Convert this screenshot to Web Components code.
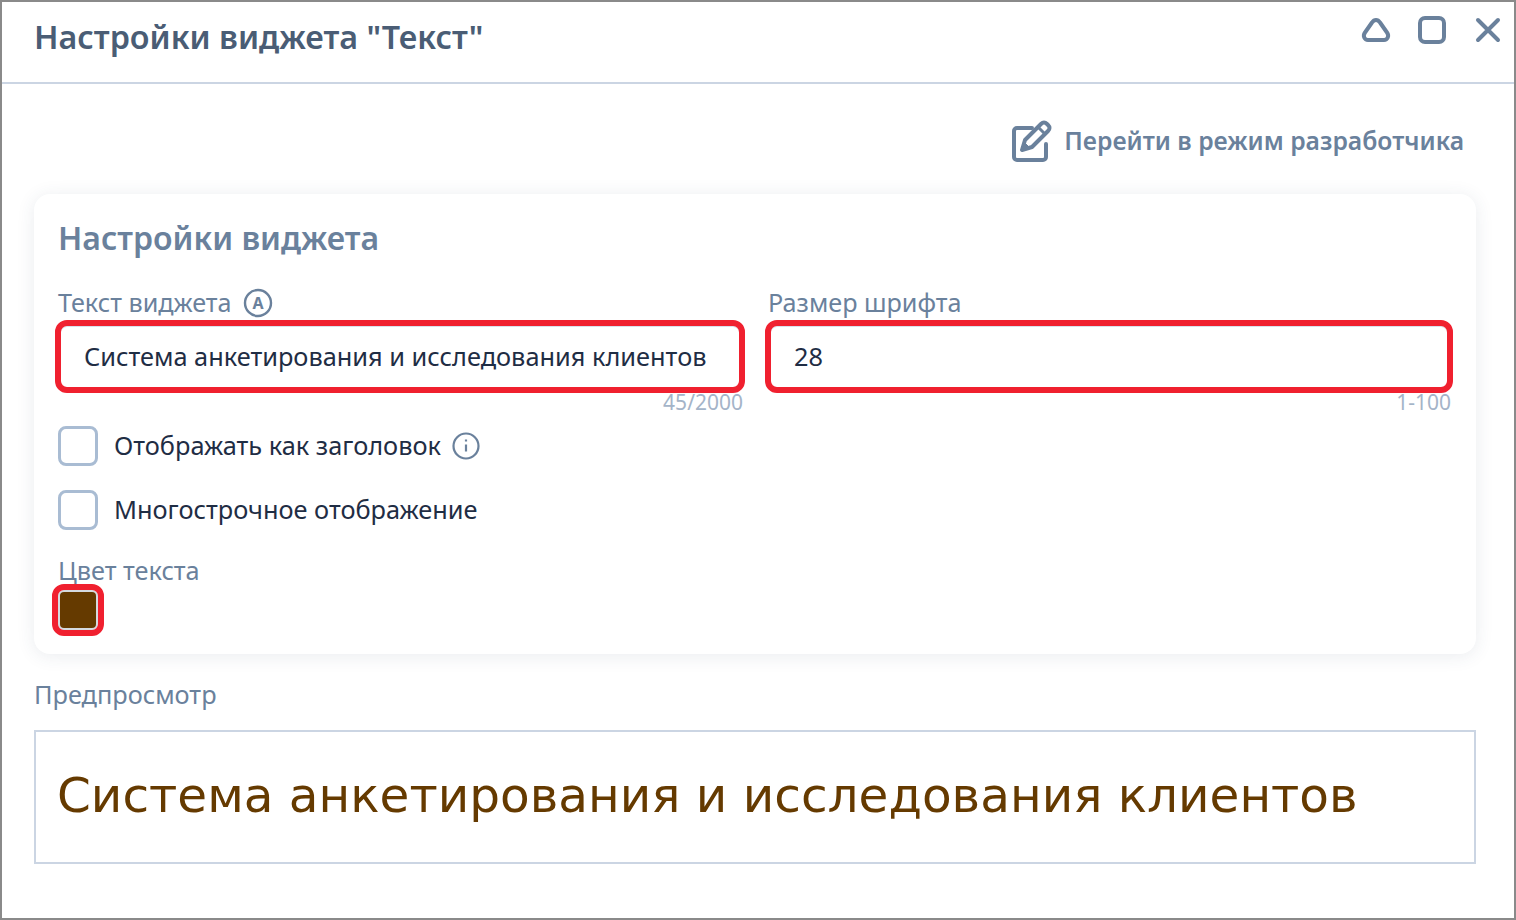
<!DOCTYPE html>
<html>
<head>
<meta charset="utf-8">
<style>
  html, body { margin: 0; height: 100%; background: #fff; }
  body { font-family: "Noto Sans", "Open Sans", sans-serif; }
</style>
</head>
<body>
<widget-window window-title='Настройки виджета "Текст"'>
  <dev-link>Перейти в режим разработчика</dev-link>
  <settings-card heading="Настройки виджета">
    <div slot="fields" style="display:contents">
      <text-field label="Текст виджета" hint="45/2000" value="Система анкетирования и исследования клиентов" auto></text-field>
      <text-field label="Размер шрифта" hint="1-100" value="28"></text-field>
    </div>
    <check-row info>Отображать как заголовок</check-row>
    <check-row>Многострочное отображение</check-row>
    <color-field label="Цвет текста" color="#653a00"></color-field>
  </settings-card>
  <preview-box label="Предпросмотр" color="#653a00">Система анкетирования и исследования клиентов</preview-box>
</widget-window>

<script>
class WidgetWindow extends HTMLElement {
  constructor() {
    super();
    this.attachShadow({ mode: "open" });
    this.shadowRoot.innerHTML = `
    <style>
    :host {
      display: flex;
      flex-direction: column;
      box-sizing: border-box;
      width: 1516px;
      height: 920px;
      border: 2px solid #8a8a8a;
      background: #fff;
    }
    header {
      display: flex;
      justify-content: space-between;
      align-items: flex-start;
      height: 82px;
      flex: none;
      box-sizing: border-box;
      border-bottom: 2px solid #cbd5e3;
      padding: 0 6px 0 32px;
    }
    h1 {
      margin: 14px 0 0;
      font-size: 32.300px;
      line-height: 40px;
      font-weight: 600;
      color: #4a5d75;
    }
    .tools { display: flex; gap: 16px; padding-top: 11px; }
    svg { display: block; width: 40px; height: 36px; fill: none; stroke: #6a819c; stroke-width: 4; stroke-linejoin: round; stroke-linecap: round; }
    main { flex: 1; padding: 0 38px 0 32px; }
    </style>
    <header>
      <h1></h1>
      <div class="tools">
        <svg viewBox="0 0 40 36"><path d="M20 7c-2 0-3 1-4 2.500L9 19.500C6.500 23 8.500 27 12 27h16c3.500 0 5.500-4 3-7.500L24 9.500C23 8 22 7 20 7z"/></svg>
        <svg viewBox="0 0 40 36"><rect x="8" y="5" width="24" height="24" rx="5"/></svg>
        <svg viewBox="0 0 40 36"><path d="M10 7l20 20M30 7L10 27"/></svg>
      </div>
    </header>
    <main><slot></slot></main>
    `;
  }
  connectedCallback() {
    this.shadowRoot.querySelector("h1").textContent = this.getAttribute("window-title");
  }
}

class DevLink extends HTMLElement {
  constructor() {
    super();
    this.attachShadow({ mode: "open" });
    this.shadowRoot.innerHTML = `
    <style>
    :host {
      display: flex;
      justify-content: flex-end;
      align-items: center;
      gap: 12px;
      height: 64px;
      margin-top: 24px;
      margin-bottom: 22px;
      padding-right: 12px;
      color: #6a819c;
      font-size: 24.700px;
      font-weight: 600;
    }
    svg { width: 44px; height: 44px; fill: none; stroke: #6a819c; stroke-width: 4; stroke-linejoin: round; stroke-linecap: round; }
    </style>
    <svg viewBox="0 0 44 44">
      <path d="M24 10H9a3 3 0 0 0-3 3v26a3 3 0 0 0 3 3h26a3 3 0 0 0 3-3V26"/>
      <path d="M14 32l3-10L33 6c2-2 4-2 6 0l1 1c2 2 2 4 0 6L24 29z"/>
      <path d="M30 9l7 7" stroke-width="3"/>
      <path d="M15 31l2-6 4 4z" fill="#6a819c" stroke-width="1"/>
    </svg>
    <span><slot></slot></span>
    `;
  }
}

class SettingsCard extends HTMLElement {
  constructor() {
    super();
    this.attachShadow({ mode: "open" });
    this.shadowRoot.innerHTML = `
    <style>
    :host {
      display: block;
      box-sizing: border-box;
      height: 460px;
      padding: 22px 23px 0 21px;
      background: #fff;
      border-radius: 16px;
      box-shadow: 0 2px 18px rgba(50, 70, 100, .10);
    }
    h2 {
      margin: 0 0 0 3px;
      font-size: 32px;
      line-height: 44px;
      font-weight: 600;
      color: #6a819c;
    }
    .fields {
      display: grid;
      grid-template-columns: 690px 1fr;
      column-gap: 20px;
      margin-top: 24px;
    }
    </style>
    <h2></h2>
    <div class="fields"><slot name="fields"></slot></div>
    <div class="rest"><slot></slot></div>
    `;
  }
  connectedCallback() {
    this.shadowRoot.querySelector("h2").textContent = this.getAttribute("heading");
  }
}

class TextField extends HTMLElement {
  constructor() {
    super();
    this.attachShadow({ mode: "open" });
    this.shadowRoot.innerHTML = `
    <style>
    :host { display: block; margin-bottom: 14px; }
    .label {
      display: flex;
      align-items: center;
      gap: 11px;
      height: 36px;
      margin-left: 3px;
      font-size: 25.200px;
      color: #6a819c;
    }
    .label svg { width: 30px; height: 30px; margin-top: 2px; }
    .input {
      box-sizing: border-box;
      height: 73px;
      border: 6px solid #f0202f;
      border-radius: 12px;
      box-shadow: inset 0 1px 0 #d8e1ec;
      padding: 0 0 2px 23px;
      display: flex;
      align-items: center;
      font-size: 25.350px;
      color: #1f2d44;
      white-space: nowrap;
      overflow: hidden;
    }
    .hint {
      text-align: right;
      padding-right: 2px;
      margin-top: -1px;
      font-size: 21px;
      line-height: 20px;
      color: #a4b4c8;
    }
    </style>
    <div class="label"><span class="t"></span></div>
    <div class="input"></div>
    <div class="hint"></div>
    `;
  }
  connectedCallback() {
    const root = this.shadowRoot;
    root.querySelector(".t").textContent = this.getAttribute("label");
    root.querySelector(".input").textContent = this.getAttribute("value");
    root.querySelector(".hint").textContent = this.getAttribute("hint");
    if (this.hasAttribute("auto")) {
      root.querySelector(".label").insertAdjacentHTML("beforeend",
        `<svg viewBox="0 0 30 30"><circle cx="15" cy="15" r="13" fill="none" stroke="#6a819c" stroke-width="2.400"/><text x="15" y="21" text-anchor="middle" font-size="16" font-weight="700" font-family="Noto Sans" fill="#6a819c">A</text></svg>`);
    }
  }
}

class CheckRow extends HTMLElement {
  constructor() {
    super();
    this.attachShadow({ mode: "open" });
    this.shadowRoot.innerHTML = `
    <style>
    :host {
      display: flex;
      align-items: center;
      gap: 16px;
      height: 40px;
      margin: 0 0 24px 3px;
      font-size: 25.350px;
      color: #1f2d44;
    }
    .box {
      box-sizing: border-box;
      width: 40px;
      height: 40px;
      border: 3px solid #a9bcd3;
      border-radius: 8px;
    }
    .text { display: flex; align-items: center; gap: 11px; margin-top: -3px; }
    svg { width: 28px; height: 28px; margin-top: 2px; }
    </style>
    <div class="box"></div>
    <div class="text"><slot></slot></div>
    `;
  }
  connectedCallback() {
    if (this.hasAttribute("info")) {
      this.shadowRoot.querySelector(".text").insertAdjacentHTML("beforeend",
        `<svg viewBox="0 0 28 28" fill="none" stroke="#6a819c" stroke-width="2.200"><circle cx="14" cy="14" r="12.500"/><path d="M14 12.500v7M14 7.500v2"/></svg>`);
    }
  }
}

class ColorField extends HTMLElement {
  constructor() {
    super();
    this.attachShadow({ mode: "open" });
    this.shadowRoot.innerHTML = `
    <style>
    :host { display: block; margin-left: 3px; }
    .label { font-size: 25.300px; line-height: 34px; color: #6a819c; margin-top: -1px; }
    .swatch {
      box-sizing: border-box;
      width: 40px;
      height: 40px;
      margin-top: 3px;
      border: 2px solid #d5dae0;
      border-radius: 6px;
      outline: 6px solid #f0202f;
    }
    </style>
    <div class="label"></div>
    <div class="swatch"></div>
    `;
  }
  connectedCallback() {
    this.shadowRoot.querySelector(".label").textContent = this.getAttribute("label");
    this.shadowRoot.querySelector(".swatch").style.background = this.getAttribute("color");
  }
}

class PreviewBox extends HTMLElement {
  constructor() {
    super();
    this.attachShadow({ mode: "open" });
    this.shadowRoot.innerHTML = `
    <style>
    :host { display: block; margin-top: 22px; }
    .label { font-size: 25.300px; line-height: 36px; color: #6a819c; }
    .box {
      box-sizing: border-box;
      height: 134px;
      margin-top: 18px;
      border: 2px solid #cbd5e3;
      padding: 0 0 4px 21px;
      display: flex;
      align-items: center;
      font-family: "DejaVu Sans", sans-serif;
      font-size: 48.500px;
      white-space: nowrap;
    }
    </style>
    <div class="label"></div>
    <div class="box"><slot></slot></div>
    `;
  }
  connectedCallback() {
    this.shadowRoot.querySelector(".label").textContent = this.getAttribute("label");
    this.shadowRoot.querySelector(".box").style.color = this.getAttribute("color");
  }
}

customElements.define("widget-window", WidgetWindow);
customElements.define("dev-link", DevLink);
customElements.define("settings-card", SettingsCard);
customElements.define("text-field", TextField);
customElements.define("check-row", CheckRow);
customElements.define("color-field", ColorField);
customElements.define("preview-box", PreviewBox);
</script>
</body>
</html>
